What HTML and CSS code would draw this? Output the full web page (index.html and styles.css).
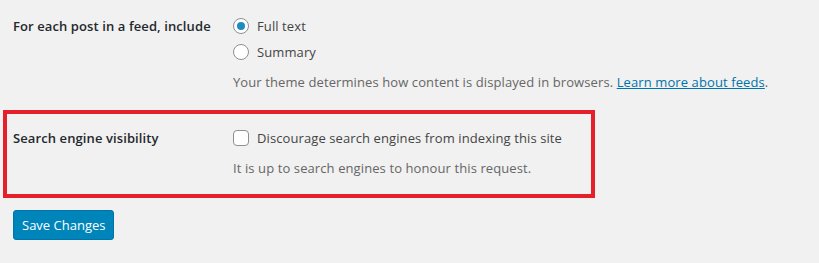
FILE: index.html
```html
<!DOCTYPE html>
<html lang="en">
<head>
  <meta charset="UTF-8" />
  <title>Reading Settings</title>
  <link rel="stylesheet" href="styles.css">
</head>
<body>

  <form class="settings">
    <div class="row row--feed">
      <div class="row__label">For each post in a feed, include</div>
      <div class="row__field">
        <label class="choice">
          <span class="radio radio--checked"></span>
          Full text
        </label>
        <label class="choice">
          <span class="radio"></span>
          Summary
        </label>
        <p class="description">Your theme determines how content is displayed in browsers. <a href="#">Learn more about feeds</a>.</p>
      </div>
    </div>

    <div class="highlight">
      <div class="row row--visibility">
        <div class="row__label">Search engine visibility</div>
        <div class="row__field">
          <label class="choice">
            <span class="checkbox"></span>
            Discourage search engines from indexing this site
          </label>
          <p class="description description--help">It is up to search engines to honour this request.</p>
        </div>
      </div>
    </div>

    <div class="submit">
      <button type="button" class="button-primary">Save Changes</button>
    </div>
  </form>

</body>
</html>
```

FILE: styles.css
```css
html, body {
  margin: 0;
  padding: 0;
  background: #f1f1f1;
}

body {
  font-family: "Open Sans", "Noto Sans", sans-serif;
  font-size: 13px;
  letter-spacing: 0.1px;
  color: #23282d;
}

.settings {
  padding: 16px 0 0 13px;
}

.row {
  display: grid;
  grid-template-columns: 220px 1fr;
}

.row__label {
  font-size: 13px;
  font-weight: 600;
  line-height: 20px;
  color: #23282d;
}

.row__field {
  display: flex;
  flex-direction: column;
}

.choice {
  display: flex;
  align-items: center;
  gap: 8px;
  height: 20px;
  margin-bottom: 6px;
  font-size: 13px;
  color: #444;
}

.radio,
.checkbox {
  box-sizing: border-box;
  width: 16px;
  height: 16px;
  border: 1px solid #8c8f94;
  background: #fff;
  flex-shrink: 0;
}

.radio {
  border-radius: 50%;
  display: flex;
  align-items: center;
  justify-content: center;
}

.radio--checked::after {
  content: "";
  width: 8px;
  height: 8px;
  border-radius: 50%;
  background: #1e8cbe;
}

.checkbox {
  border-radius: 4px;
}

.description {
  margin: 4px 0 0;
  line-height: 20px;
  color: #666;
}

.description a {
  color: #0073aa;
}

.highlight {
  width: 578px;
  margin: 18px 0 0 -10px;
  padding: 14px 0 16px 6px;
  border: 4px solid #e5202b;
}

.row--visibility .choice {
  margin-bottom: 0;
}

.description--help {
  margin-top: 10px;
}

.submit {
  padding-top: 12px;
}

.button-primary {
  height: 30px;
  padding: 0 8px;
  border: 1px solid #0073aa;
  border-radius: 3px;
  background: #0085ba;
  color: #fff;
  font-family: inherit;
  font-size: 13px;
  letter-spacing: 0;
}
```
